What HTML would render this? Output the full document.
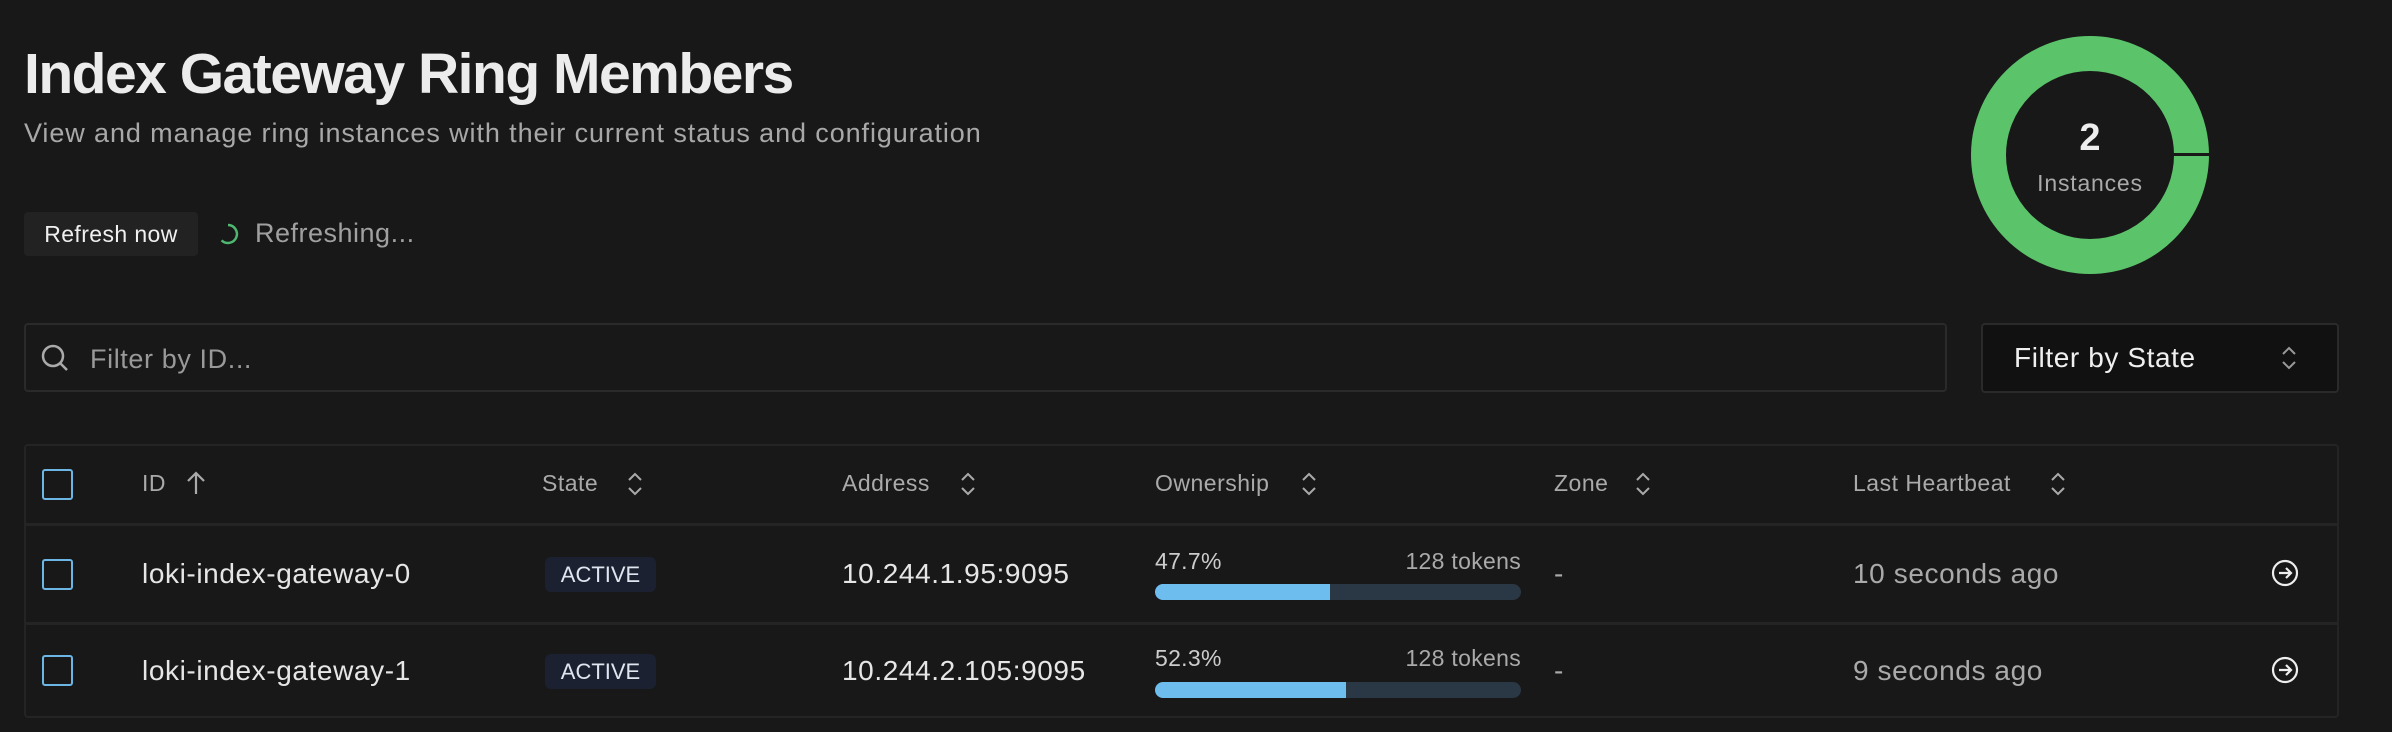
<!DOCTYPE html>
<html><head><meta charset="utf-8"><style>
*{box-sizing:border-box;margin:0;padding:0}
body{width:2392px;height:732px;background:#181818;font-family:"Liberation Sans",sans-serif;color:#eee;position:relative;overflow:hidden}
.a{position:absolute;white-space:nowrap}
h1{position:absolute;left:24px;top:41px;font-size:57px;font-weight:bold;letter-spacing:-1.5px;color:#ececec}
.sub{left:24px;top:118px;font-size:27px;color:#a8a8a8;letter-spacing:0.9px}
.btn{left:24px;top:212px;width:174px;height:44px;background:#222;border-radius:4px;font-size:23px;color:#f0f0f0;line-height:44px;text-align:center;letter-spacing:0.4px}
.search{left:24px;top:323px;width:1923px;height:69px;border:2px solid #2a2a2a;border-radius:4px}
.fs{left:1981px;top:323px;width:358px;height:70px;border:2px solid #2a2a2a;border-radius:4px;background:#111}
.tbl{left:24px;top:444px;width:2315px;height:274px;border:2px solid #242424;border-radius:4px}
.hl{position:absolute;left:0;right:0;height:3px;background:#242424}
.th{font-size:23px;color:#aaa;top:470px;letter-spacing:0.5px}
.td{font-size:28px;color:#e6e6e6;letter-spacing:0.6px}
.cb{position:absolute;left:42px;width:31px;height:31px;border:2px solid #6cb6e6;border-radius:3px}
.badge{left:545px;width:111px;height:35px;background:#1b2130;border-radius:6px;font-size:22px;color:#e0e6f0;line-height:35px;text-align:center}
.bar{left:1155px;width:366px;height:16px;background:#2a3744;border-radius:8px;overflow:hidden}
.bar i{display:block;height:100%;background:#6dbdee}
.sm{font-size:23px;color:#ccc;letter-spacing:0.3px}
.tok{right:871px;font-size:23px;color:#aaa;letter-spacing:0.3px}
</style></head><body>
<h1>Index Gateway Ring Members</h1>
<div class="a sub">View and manage ring instances with their current status and configuration</div>
<div class="a btn">Refresh now</div>
<svg class="a" style="left:216px;top:222px" width="24" height="24" viewBox="0 0 24 24"><path d="M12 3a9 9 0 1 1-6.4 15.4" fill="none" stroke="#4fb870" stroke-width="2.5"/></svg>
<div class="a" style="left:255px;top:218px;font-size:27px;color:#a0a0a0;letter-spacing:0.5px">Refreshing...</div>

<svg class="a" style="left:1971px;top:36px" width="240" height="240" viewBox="0 0 240 240">
<circle cx="119" cy="119" r="101.5" fill="none" stroke="#5bc36a" stroke-width="35"/>
<rect x="185" y="117" width="56" height="3" fill="#181818"/>
<text x="119" y="114" text-anchor="middle" font-family="Liberation Sans" font-weight="bold" font-size="38" fill="#eee">2</text>
<text x="119" y="155" text-anchor="middle" font-family="Liberation Sans" font-size="23" letter-spacing="0.8" fill="#aaa">Instances</text>
</svg>

<div class="a search"></div>
<svg class="a" style="left:40px;top:343px" width="30" height="30" viewBox="0 0 30 30"><circle cx="13" cy="13" r="10" fill="none" stroke="#aaa" stroke-width="2.5"/><path d="M20.5 20.5L27 27" stroke="#aaa" stroke-width="2.5"/></svg>
<div class="a" style="left:90px;top:344px;font-size:27px;color:#999;letter-spacing:0.6px">Filter by ID...</div>
<div class="a fs"></div>
<div class="a" style="left:2014px;top:342px;font-size:28px;color:#f0f0f0;letter-spacing:0.6px">Filter by State</div>
<svg class="a" style="left:2279px;top:344px" width="20" height="28" viewBox="0 0 20 28"><path d="M4 10l6-6 6 6M4 18l6 6 6-6" fill="none" stroke="#999" stroke-width="2"/></svg>

<div class="a tbl"><div class="hl" style="top:77px"></div><div class="hl" style="top:176px"></div></div>
<div class="cb" style="top:469px"></div>
<div class="cb" style="top:559px"></div>
<div class="cb" style="top:655px"></div>
<div class="a th" style="left:142px">ID</div>
<svg class="a" style="left:185px;top:470px" width="22" height="26" viewBox="0 0 22 26"><path d="M11 24V3M3 11l8-8 8 8" fill="none" stroke="#aaa" stroke-width="2.2"/></svg>
<div class="a th" style="left:542px">State</div>
<div class="a th" style="left:842px">Address</div>
<div class="a th" style="left:1155px">Ownership</div>
<div class="a th" style="left:1554px">Zone</div>
<div class="a th" style="left:1853px">Last Heartbeat</div>
<svg class="a" style="left:625px;top:470px" width="20" height="28" viewBox="0 0 20 28"><path d="M4 10l6-6 6 6M4 18l6 6 6-6" fill="none" stroke="#aaa" stroke-width="2"/></svg>
<svg class="a" style="left:958px;top:470px" width="20" height="28" viewBox="0 0 20 28"><path d="M4 10l6-6 6 6M4 18l6 6 6-6" fill="none" stroke="#aaa" stroke-width="2"/></svg>
<svg class="a" style="left:1299px;top:470px" width="20" height="28" viewBox="0 0 20 28"><path d="M4 10l6-6 6 6M4 18l6 6 6-6" fill="none" stroke="#aaa" stroke-width="2"/></svg>
<svg class="a" style="left:1633px;top:470px" width="20" height="28" viewBox="0 0 20 28"><path d="M4 10l6-6 6 6M4 18l6 6 6-6" fill="none" stroke="#aaa" stroke-width="2"/></svg>
<svg class="a" style="left:2048px;top:470px" width="20" height="28" viewBox="0 0 20 28"><path d="M4 10l6-6 6 6M4 18l6 6 6-6" fill="none" stroke="#aaa" stroke-width="2"/></svg>

<div class="a td" style="left:142px;top:558px">loki-index-gateway-0</div>
<div class="a badge" style="top:557px">ACTIVE</div>
<div class="a td" style="left:842px;top:558px">10.244.1.95:9095</div>
<div class="a sm" style="left:1155px;top:548px">47.7%</div>
<div class="a tok" style="top:548px">128 tokens</div>
<div class="a bar" style="top:584px"><i style="width:47.7%"></i></div>
<div class="a td" style="left:1554px;top:558px;color:#aaa">-</div>
<div class="a td" style="left:1853px;top:558px;color:#aaa">10 seconds ago</div>
<svg class="a" style="left:2270px;top:558px" width="30" height="30" viewBox="0 0 30 30"><circle cx="15" cy="15" r="12" fill="none" stroke="#eee" stroke-width="2.2"/><path d="M9 15h12M16 10l5 5-5 5" fill="none" stroke="#eee" stroke-width="2.2"/></svg>

<div class="a td" style="left:142px;top:655px">loki-index-gateway-1</div>
<div class="a badge" style="top:654px">ACTIVE</div>
<div class="a td" style="left:842px;top:655px">10.244.2.105:9095</div>
<div class="a sm" style="left:1155px;top:645px">52.3%</div>
<div class="a tok" style="top:645px">128 tokens</div>
<div class="a bar" style="top:682px"><i style="width:52.3%"></i></div>
<div class="a td" style="left:1554px;top:655px;color:#aaa">-</div>
<div class="a td" style="left:1853px;top:655px;color:#aaa">9 seconds ago</div>
<svg class="a" style="left:2270px;top:655px" width="30" height="30" viewBox="0 0 30 30"><circle cx="15" cy="15" r="12" fill="none" stroke="#eee" stroke-width="2.2"/><path d="M9 15h12M16 10l5 5-5 5" fill="none" stroke="#eee" stroke-width="2.2"/></svg>
</body></html>
